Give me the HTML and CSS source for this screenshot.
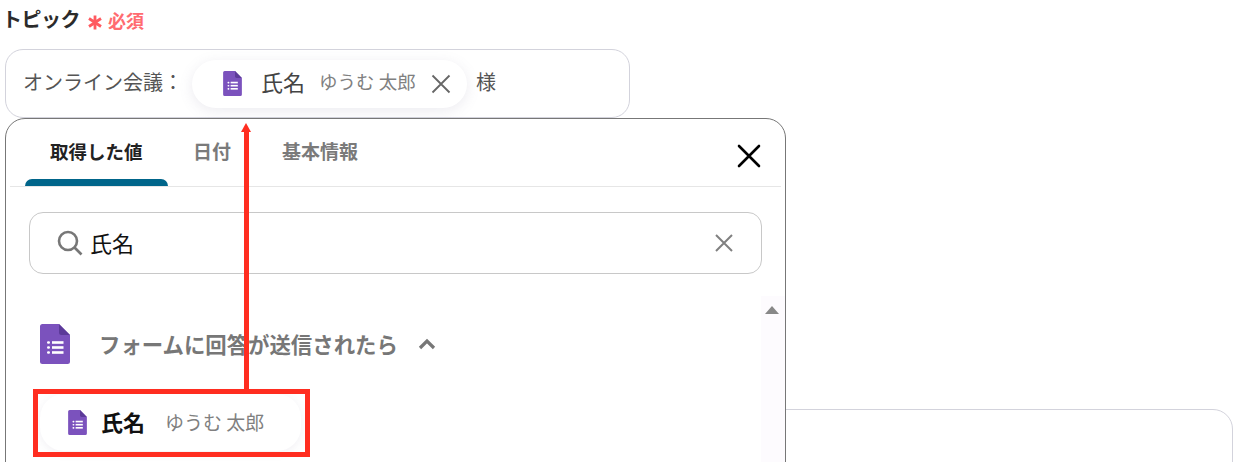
FILE: index.html
```html
<!DOCTYPE html>
<html lang="ja">
<head>
  <meta charset="UTF-8">
  <title>トピック</title>
  <link rel="stylesheet" href="styles.css">
</head>
<body>
  <svg class="defs" width="0" height="0">
    <symbol id="forms" viewBox="0 0 30 40">
      <path d="M2.5 0H19L30 11V37.5A2.5 2.5 0 0 1 27.500 40H2.500A2.500 2.500 0 0 1 0 37.500V2.500A2.500 2.500 0 0 1 2.500 0Z" fill="#7b52bd"/>
      <path d="M19 0L30 11H21.500A2.500 2.500 0 0 1 19 8.500Z" fill="#5c3a99"/>
      <g fill="#fff">
        <rect x="7" y="17.200" width="3" height="2.600" rx="1.200"/>
        <rect x="7" y="22.200" width="3" height="2.600" rx="1.200"/>
        <rect x="7" y="27.200" width="3" height="2.600" rx="1.200"/>
        <rect x="12" y="17.200" width="11.500" height="2.600"/>
        <rect x="12" y="22.200" width="11.500" height="2.600"/>
        <rect x="12" y="27.200" width="11.500" height="2.600"/>
      </g>
    </symbol>
  </svg>

  <div class="page">
    <!-- トピック入力 -->
    <div class="label">
      <span class="label-text">トピック</span>
      <svg class="asterisk" viewBox="0 0 14 15"><path d="M7 0.500V14.500M1 3.500L13 11.500M13 3.500L1 11.500"/></svg>
      <span class="required">必須</span>
    </div>

    <div class="field">
      <span class="field-text">オンライン会議：</span>
      <span class="chip">
        <svg class="chip-icon"><use href="#forms"/></svg>
        <span class="chip-name">氏名</span>
        <span class="chip-value">ゆうむ 太郎</span>
        <svg class="chip-close" viewBox="0 0 20 20"><path d="M1.500 1.500L18.500 18.500M18.500 1.500L1.500 18.500"/></svg>
      </span>
      <span class="field-text">様</span>
    </div>

    <!-- 次の入力欄（パネルの下に隠れる） -->
    <div class="field-next"></div>

    <!-- 値の選択パネル -->
    <div class="panel">
      <div class="tabs">
        <div class="tab active">取得した値</div>
        <div class="tab">日付</div>
        <div class="tab">基本情報</div>
        <svg class="panel-close" viewBox="0 0 24 24"><path d="M2 2L22 22M22 2L2 22"/></svg>
      </div>

      <div class="search">
        <svg class="search-icon" viewBox="0 0 26 26"><circle cx="11" cy="11" r="9"/><path d="M17.500 17.500L24.500 24.500"/></svg>
        <span class="search-text">氏名</span>
        <svg class="search-clear" viewBox="0 0 18 18"><path d="M1 1L17 17M17 1L1 17"/></svg>
      </div>

      <div class="list">
        <div class="group">
          <svg class="group-icon"><use href="#forms"/></svg>
          <span class="group-name">フォームに回答が送信されたら</span>
          <svg class="group-toggle" viewBox="0 0 18 12"><path d="M2 10L9 3L16 10"/></svg>
        </div>
        <div class="item">
          <svg class="item-icon"><use href="#forms"/></svg>
          <span class="item-name">氏名</span>
          <span class="item-value">ゆうむ 太郎</span>
        </div>
        <div class="scrollbar"><span class="scroll-up"></span></div>
      </div>
    </div>

    <!-- 赤い注釈 -->
    <div class="mark-box"></div>
    <div class="mark-arrow"></div>
  </div>
</body>
</html>
```

FILE: styles.css
```css
body {
  margin: 0;
  background: #fff;
  font-family: "Noto Sans CJK JP", "Noto Sans", sans-serif;
  color: #333;
}

.defs {
  position: absolute;
}

.page {
  position: relative;
  height: 462px;
  overflow: hidden;
  padding-left: 5px;
  box-sizing: border-box;
}

/* ラベル */
.label {
  display: flex;
  align-items: center;
  height: 40px;
  margin-bottom: 9px;
}

.label-text {
  margin-left: -3px;
  padding-bottom: 4px;
  font-size: 20px;
  font-weight: 700;
  color: #2b2b2b;
  letter-spacing: -0.5px;
}

.asterisk {
  width: 14px;
  height: 15px;
  margin: 5px 0 0 8px;
  fill: none;
  stroke: #ff5a60;
  stroke-width: 2.800;
}

.required {
  margin-left: 6px;
  font-size: 18px;
  font-weight: 700;
  color: #ff6b70;
}

/* 入力欄 */
.field {
  display: flex;
  align-items: center;
  width: 625px;
  height: 69px;
  padding-left: 17px;
  box-sizing: border-box;
  border: 1px solid #d3d3dc;
  border-radius: 18px;
}

.field-text {
  padding-bottom: 5px;
  font-size: 20px;
  color: #555;
}

.chip {
  display: flex;
  align-items: center;
  width: 275px;
  height: 48px;
  margin-left: 9px;
  margin-right: 9px;
  padding-left: 31px;
  box-sizing: border-box;
  background: #fff;
  border-radius: 24px;
  box-shadow: 0 3px 14px rgba(120, 110, 150, 0.14);
}

.chip-icon {
  width: 19px;
  height: 25px;
  flex: none;
}

.chip-name {
  margin-left: 19px;
  padding-bottom: 5px;
  font-size: 22px;
  color: #444;
}

.chip-value {
  margin-left: 14px;
  padding-bottom: 5px;
  font-size: 18.500px;
  color: #808080;
}

.chip-close {
  width: 20px;
  height: 20px;
  margin-left: 15px;
  fill: none;
  stroke: #666;
  stroke-width: 1.800;
}

.field-next {
  width: 1228px;
  height: 80px;
  margin-top: 291px;
  box-sizing: border-box;
  border: 1px solid #d3d3dc;
  border-radius: 20px;
}

/* パネル */
.panel {
  position: absolute;
  left: 5px;
  top: 118px;
  width: 781px;
  height: 360px;
  box-sizing: border-box;
  background: #fff;
  border: 1px solid #777;
  border-radius: 20px 20px 0 0;
}

.tabs {
  position: relative;
  display: flex;
  height: 67px;
  margin: 0 4px;
  padding-left: 15px;
  border-bottom: 1px solid #e6e6e6;
}

.tab {
  position: relative;
  height: 67px;
  box-sizing: border-box;
  padding: 18px 25.500px 0;
  font-size: 19px;
  line-height: 28px;
  font-weight: 700;
  color: #7a7a7a;
}

.tab.active {
  padding: 18px 25px 0;
  font-size: 18.500px;
  color: #222;
}

.tab.active::after {
  content: "";
  position: absolute;
  left: 0;
  right: 0;
  bottom: 0;
  height: 7px;
  background: #00658a;
  border-radius: 8px 8px 0 0;
}

.panel-close {
  position: absolute;
  right: 20px;
  top: 25px;
  width: 24px;
  height: 24px;
  fill: none;
  stroke: #000;
  stroke-width: 2.600;
  stroke-linecap: round;
}

.search {
  display: flex;
  align-items: center;
  width: 733px;
  height: 62px;
  margin: 25px 0 0 23px;
  padding: 0 28px 0 27px;
  box-sizing: border-box;
  border: 1px solid #c8c8c8;
  border-radius: 14px;
}

.search-icon {
  width: 26px;
  height: 26px;
  flex: none;
  fill: none;
  stroke: #777;
  stroke-width: 2.600;
}

.search-text {
  margin-left: 7px;
  padding-bottom: 3px;
  font-size: 22px;
  color: #111;
}

.search-clear {
  width: 18px;
  height: 18px;
  margin-left: auto;
  fill: none;
  stroke: #808080;
  stroke-width: 2;
}

.list {
  position: relative;
  padding-top: 50px;
}

.group {
  display: flex;
  align-items: center;
  height: 40px;
  padding-left: 34px;
}

.group-icon {
  width: 30px;
  height: 40px;
  flex: none;
}

.group-name {
  margin-left: 29px;
  padding-bottom: 2px;
  font-size: 21.400px;
  font-weight: 700;
  color: #777;
}

.group-toggle {
  width: 18px;
  height: 12px;
  margin-left: 20px;
  fill: none;
  stroke: #777;
  stroke-width: 3.200;
}

.item {
  display: flex;
  align-items: center;
  width: 261px;
  height: 57px;
  margin: 30px 0 0 34px;
  padding-left: 28px;
  box-sizing: border-box;
  border-radius: 24px;
  box-shadow: 0 2px 10px rgba(120, 110, 150, 0.1);
}

.item-icon {
  width: 19px;
  height: 25px;
  flex: none;
}

.item-name {
  margin-left: 14px;
  padding-bottom: 3px;
  font-size: 22px;
  font-weight: 700;
  color: #111;
}

.item-value {
  margin-left: 20px;
  padding-bottom: 3px;
  font-size: 19px;
  color: #808080;
}

.scrollbar {
  position: absolute;
  right: 0;
  top: 22px;
  bottom: -40px;
  width: 24px;
  background: #fdfbfe;
}

.scroll-up {
  position: absolute;
  left: 4px;
  top: 10px;
  border-left: 7px solid transparent;
  border-right: 7px solid transparent;
  border-bottom: 8px solid #888;
}

/* 赤い注釈 */
.mark-box {
  position: absolute;
  left: 33px;
  top: 389px;
  width: 277px;
  height: 68px;
  box-sizing: border-box;
  border: 5px solid #ff2d20;
}

.mark-arrow {
  position: absolute;
  left: 244px;
  top: 132px;
  width: 5px;
  height: 257px;
  background: #ff2d20;
}

.mark-arrow::before {
  content: "";
  position: absolute;
  left: -3px;
  top: -9px;
  border-left: 5.500px solid transparent;
  border-right: 5.500px solid transparent;
  border-bottom: 9px solid #ff2d20;
}
```
